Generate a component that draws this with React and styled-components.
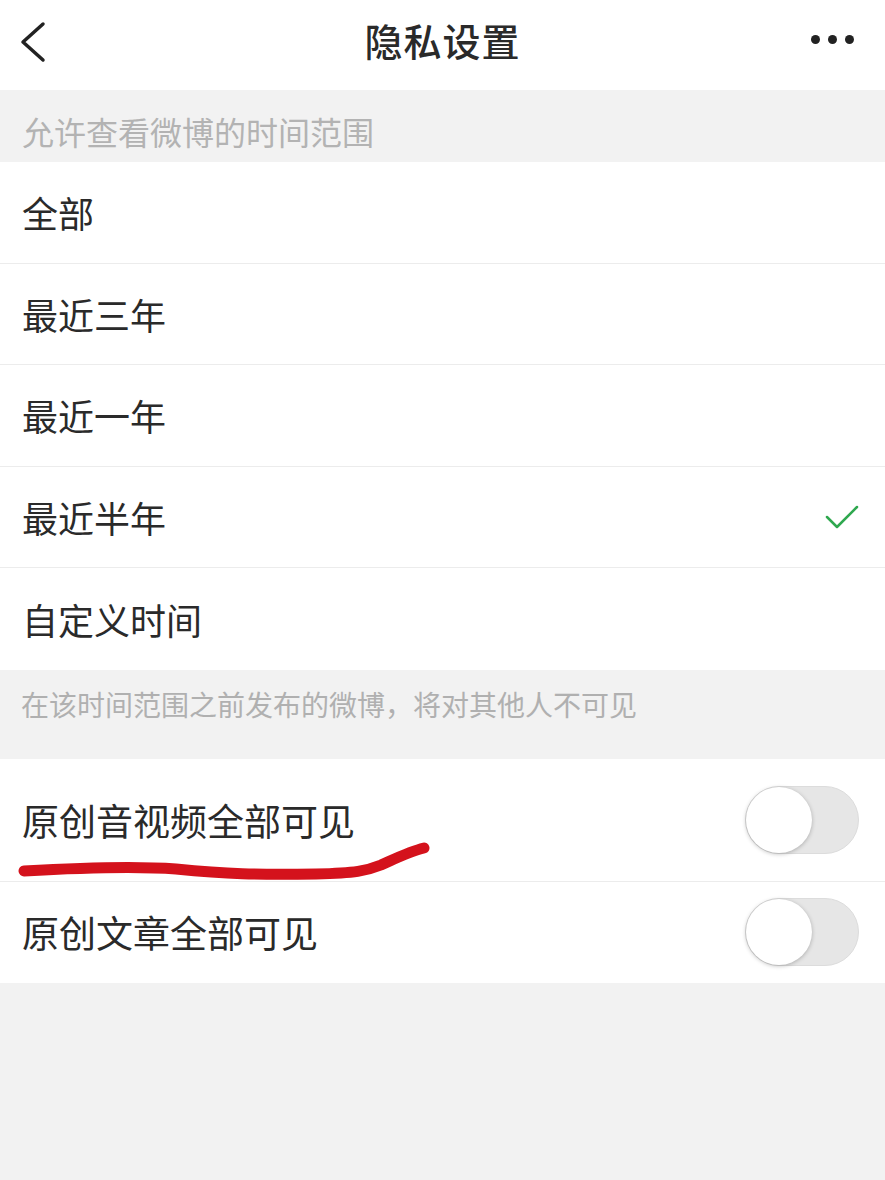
import styled, { createGlobalStyle } from 'styled-components';

const GlobalStyle = createGlobalStyle`
  html, body {
    margin: 0;
    padding: 0;
    background: #f2f2f2;
    font-family: "Noto Sans CJK SC", "Noto Sans", sans-serif;
  }
`;

const periods = ['全部', '最近三年', '最近一年', '最近半年', '自定义时间'];
const selected = '最近半年';

const App = () => (
  <Page>
    <GlobalStyle />
    <NavBar>
      <BackButton>
        <svg width="28" height="42" viewBox="0 0 28 42">
          <path d="M25 3 L5 21 L25 39" fill="none" stroke="#222" strokeWidth="3.5" strokeLinecap="round" strokeLinejoin="round" />
        </svg>
      </BackButton>
      <Title>隐私设置</Title>
      <More>
        <Dot />
        <Dot />
        <Dot />
      </More>
    </NavBar>

    <SectionHeader>允许查看微博的时间范围</SectionHeader>
    <List>
      {periods.map((p) => (
        <Row key={p}>
          <Label>{p}</Label>
          {p === selected && (
            <svg width="34" height="26" viewBox="0 0 34 26">
              <path d="M2 13 L12 23 L32 3" fill="none" stroke="#2fa84f" strokeWidth="2.5" strokeLinecap="round" strokeLinejoin="round" />
            </svg>
          )}
        </Row>
      ))}
    </List>
    <SectionFooter>在该时间范围之前发布的微博，将对其他人不可见</SectionFooter>

    <List>
      <Row $height={123}>
        <Label $size={37}>原创音视频全部可见</Label>
        <Switch />
        <Scribble viewBox="0 0 420 40" width="420" height="40">
          <path
            d="M8 30 C60 27 120 25 160 28 C210 33 240 34 300 33 C340 32 350 30 365 24 C385 15 395 10 408 7"
            fill="none"
            stroke="#d4121c"
            strokeWidth="11"
            strokeLinecap="round"
          />
        </Scribble>
      </Row>
      <Row>
        <Label $size={37}>原创文章全部可见</Label>
        <Switch />
      </Row>
    </List>
  </Page>
);

const Page = styled.div`
  width: 885px;
  min-height: 1180px;
  background: #f2f2f2;
`;

const NavBar = styled.header`
  height: 90px;
  box-sizing: border-box;
  padding-bottom: 12px;
  background: #fff;
  display: grid;
  grid-template-columns: 100px 1fr 100px;
  align-items: center;
`;

const BackButton = styled.div`
  display: flex;
  align-items: center;
  padding-left: 18px;
  padding-top: 6px;
`;

const Title = styled.h1`
  margin: 0;
  text-align: center;
  font-size: 38px;
  font-weight: 500;
  color: #2a2a2a;
  letter-spacing: 1px;
`;

const More = styled.div`
  display: flex;
  justify-content: flex-end;
  gap: 8px;
  padding-right: 31px;
`;

const Dot = styled.span`
  width: 9px;
  height: 9px;
  border-radius: 50%;
  background: #222;
`;

const SectionHeader = styled.div`
  height: 72px;
  box-sizing: border-box;
  padding: 21px 0 0 22px;
  font-size: 32px;
  color: #b3b3b3;
  line-height: 40px;
`;

const List = styled.div`
  background: #fff;
`;

const Row = styled.div`
  position: relative;
  height: ${(p) => p.$height || 101.5}px;
  box-sizing: border-box;
  display: flex;
  align-items: center;
  justify-content: space-between;
  padding: 0 26px 0 22px;
  border-bottom: 1px solid #ececec;
  &:last-child {
    border-bottom: none;
  }
`;

const Label = styled.span`
  font-size: ${(p) => p.$size || 36}px;
  color: #2a2a2a;
`;

const SectionFooter = styled.div`
  height: 89px;
  box-sizing: border-box;
  padding: 16px 0 0 21px;
  font-size: 28px;
  line-height: 36px;
  color: #b0b0b0;
`;

const Switch = styled.div`
  position: relative;
  width: 114px;
  height: 68px;
  box-sizing: border-box;
  border-radius: 34px;
  background: #e6e6e6;
  border: 1px solid #dcdcdc;
  &::after {
    content: '';
    position: absolute;
    left: 0;
    top: 0;
    width: 66px;
    height: 66px;
    border-radius: 50%;
    background: #fff;
    box-shadow: 0 1px 4px rgba(0, 0, 0, 0.25);
  }
`;

const Scribble = styled.svg`
  position: absolute;
  left: 16px;
  top: 82px;
`;

export default App;
